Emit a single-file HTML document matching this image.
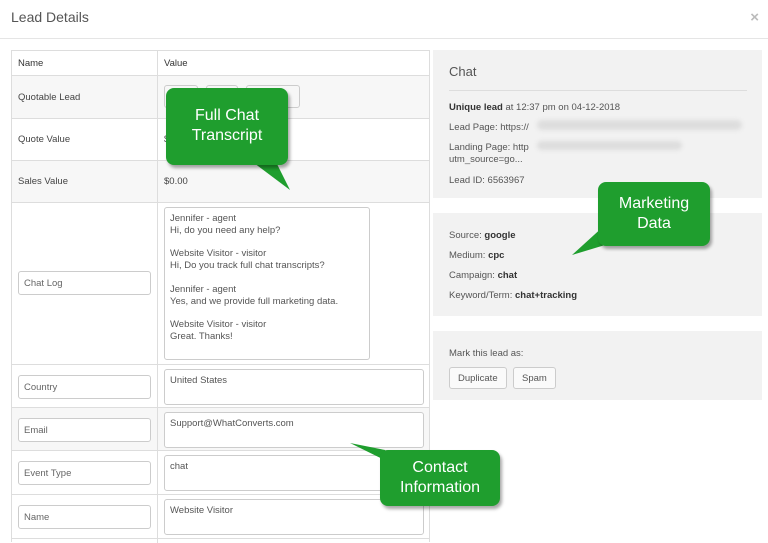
<!DOCTYPE html>
<html><head><meta charset="utf-8"><style>
*{box-sizing:border-box;margin:0;padding:0}
body{width:768px;height:542px;background:#fff;font-family:"Liberation Sans",sans-serif;color:#444;position:relative;overflow:hidden;font-size:9.5px}
.a{position:absolute}
.hdr{left:11px;top:9px;font-size:14px;color:#555}
.x{right:9px;top:9px;font-size:15px;color:#bbb;font-weight:bold}
.hl{left:0;top:38px;width:768px;height:1px;background:#e5e5e5}
.tbl{left:11px;top:50px;width:419px;height:492px;border:1px solid #ddd;border-bottom:none}
.row{position:absolute;left:0;width:417px;border-bottom:1px solid #ddd}
.row.g{background:#f7f7f7}
.vd{position:absolute;left:145px;top:0;width:1px;height:492px;background:#ddd}
.lbl{position:absolute;left:6px}
.val{position:absolute;left:152px}
.inp{position:absolute;left:6px;width:133px;height:24px;border:1px solid #ccc;border-radius:3px;background:#fff;padding:6px 5px;color:#666}
.ta{position:absolute;left:152px;width:260px;border:1px solid #ccc;border-radius:3px;background:#fff;padding:5px;color:#555;line-height:12px}
.pan{background:#f2f2f2;left:433px;width:329px}
.pan p{position:absolute;left:16px;color:#555}
b{color:#333}
.btn{position:absolute;top:36px;height:22px;border:1px solid #ccc;border-radius:3px;background:#fafafa;padding:5px 8px;color:#555}
.bub{background:#1f9e2e;color:#fff;font-size:16px;text-align:center;line-height:20px;border-radius:8px;box-shadow:2px 3px 3px rgba(0,0,0,.35)}
</style></head><body>
<div class="a hdr">Lead Details</div>
<div class="a x">×</div>
<div class="a hl"></div>
<div class="a tbl">
<div class="row" style="top:0;height:25px"><span class="lbl" style="top:7px;color:#333">Name</span><span class="val" style="top:7px;color:#333">Value</span></div>
<div class="row g" style="top:25px;height:43px"><span class="lbl" style="top:16px">Quotable Lead</span>
<span style="position:absolute;left:152px;top:9px;width:34px;height:23px;border:1px solid #ccc;border-radius:3px"></span><span style="position:absolute;left:194px;top:9px;width:32px;height:23px;border:1px solid #ccc;border-radius:3px"></span><span style="position:absolute;left:234px;top:9px;width:54px;height:23px;border:1px solid #ccc;border-radius:3px"></span></div>
<div class="row" style="top:68px;height:42px"><span class="lbl" style="top:15px">Quote Value</span><span class="val" style="top:15px">$</span></div>
<div class="row g" style="top:110px;height:42px"><span class="lbl" style="top:15px">Sales Value</span><span class="val" style="top:15px">$0.00</span></div>
<div class="row" style="top:152px;height:162px"><div class="inp" style="top:68px">Chat Log</div>
<div class="ta" style="top:4px;height:153px;width:206px;line-height:11.8px">Jennifer - agent<br>Hi, do you need any help?<br><br>Website Visitor - visitor<br>Hi, Do you track full chat transcripts?<br><br>Jennifer - agent<br>Yes, and we provide full marketing data.<br><br>Website Visitor - visitor<br>Great. Thanks!</div></div>
<div class="row" style="top:314px;height:43px"><div class="inp" style="top:10px">Country</div><div class="ta" style="top:4px;height:36px">United States</div></div>
<div class="row g" style="top:357px;height:43px"><div class="inp" style="top:10px">Email</div><div class="ta" style="top:4px;height:36px">Support@WhatConverts.com</div></div>
<div class="row" style="top:400px;height:44px"><div class="inp" style="top:10px">Event Type</div><div class="ta" style="top:4px;height:36px">chat</div></div>
<div class="row" style="top:444px;height:44px"><div class="inp" style="top:10px">Name</div><div class="ta" style="top:4px;height:36px">Website Visitor</div></div>
<div class="vd"></div>
</div>
<div class="a pan" style="top:50px;height:148px">
<p style="top:14px;font-size:13px;color:#555">Chat</p>
<div style="position:absolute;left:16px;top:40px;width:298px;height:1px;background:#ddd"></div>
<p style="top:52px"><b>Unique lead</b> at 12:37 pm on 04-12-2018</p>
<p style="top:72px">Lead Page: https://</p>
<div style="position:absolute;left:104px;top:70px;width:205px;height:10px;background:#ddd;border-radius:5px;filter:blur(2px)"></div>
<p style="top:92px;line-height:12px">Landing Page: http<br>utm_source=go...</p>
<div style="position:absolute;left:104px;top:91px;width:145px;height:9px;background:#ddd;border-radius:5px;filter:blur(2px)"></div>
<p style="top:125px">Lead ID: 6563967</p>
</div>
<div class="a pan" style="top:213px;height:103px">
<p style="top:17px">Source: <b>google</b></p>
<p style="top:37px">Medium: <b>cpc</b></p>
<p style="top:57px">Campaign: <b>chat</b></p>
<p style="top:77px">Keyword/Term: <b>chat+tracking</b></p>
</div>
<div class="a pan" style="top:331px;height:69px">
<p style="top:17px">Mark this lead as:</p>
<span class="btn" style="left:16px">Duplicate</span><span class="btn" style="left:80px">Spam</span>
</div>
<svg class="a" style="left:0;top:0" width="768" height="542">
<polygon points="250,160 275,160 290,190" fill="#1f9e2e"/>
<polygon points="605,225 605,245 572,255" fill="#1f9e2e"/>
<polygon points="385,450 405,470 350,443" fill="#1f9e2e"/>
</svg>
<div class="a bub" style="left:166px;top:88px;width:122px;height:77px;padding-top:18px">Full Chat<br>Transcript</div>
<div class="a bub" style="left:598px;top:182px;width:112px;height:64px;padding-top:12px">Marketing<br>Data</div>
<div class="a bub" style="left:380px;top:450px;width:120px;height:56px;padding-top:8px">Contact<br>Information</div>
</body></html>
